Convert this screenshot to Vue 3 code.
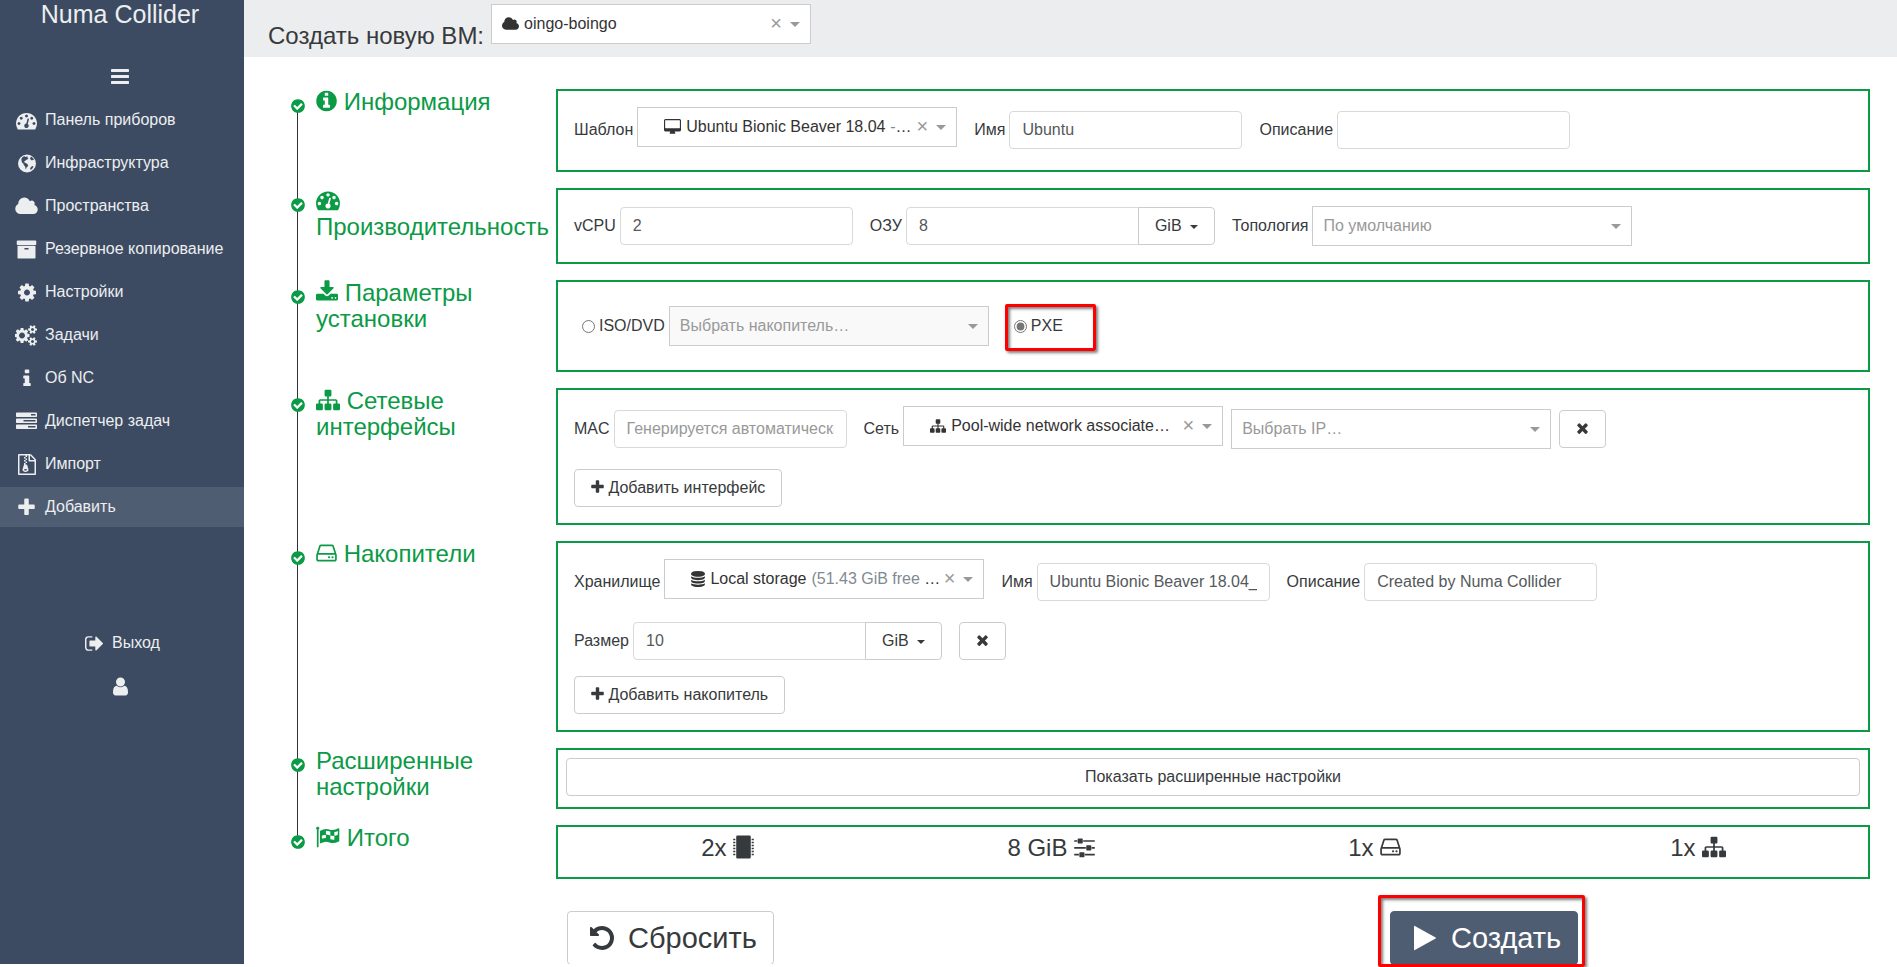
<script setup>
import { h, ref } from 'vue'

// Each glyph: [left edge, advance width, path], drawn on a 1792-unit em square.
const glyphs = {
  bars: [128, 1536, 'M1664 1344v128q0 26-19 45t-45 19h-1408q-26 0-45-19t-19-45v-128q0-26 19-45t45-19h1408q26 0 45 19t19 45zm0-512v128q0 26-19 45t-45 19h-1408q-26 0-45-19t-19-45v-128q0-26 19-45t45-19h1408q26 0 45 19t19 45zm0-512v128q0 26-19 45t-45 19h-1408q-26 0-45-19t-19-45v-128q0-26 19-45t45-19h1408q26 0 45 19t19 45z'],
  gauge: [0, 1792, 'M384 1152q0-53-37.5-90.5t-90.5-37.5-90.5 37.5-37.5 90.5 37.5 90.5 90.5 37.5 90.5-37.5 37.5-90.5zm192-448q0-53-37.5-90.5t-90.5-37.5-90.5 37.5-37.5 90.5 37.5 90.5 90.5 37.5 90.5-37.5 37.5-90.5zm428 481l101-382q6-26-7.5-48.5t-38.5-29.5-48 6.5-30 39.5l-101 382q-60 5-107 43.5t-63 98.5q-20 77 20 146t117 89 146-20 89-117q16-60-6-117t-72-91zm660-33q0-53-37.5-90.5t-90.5-37.5-90.5 37.5-37.5 90.5 37.5 90.5 90.5 37.5 90.5-37.5 37.5-90.5zm-640-640q0-53-37.5-90.5t-90.5-37.5-90.5 37.5-37.5 90.5 37.5 90.5 90.5 37.5 90.5-37.5 37.5-90.5zm448 192q0-53-37.5-90.5t-90.5-37.5-90.5 37.5-37.5 90.5 37.5 90.5 90.5 37.5 90.5-37.5 37.5-90.5zm320 448q0 261-141 483-19 29-54 29h-1402q-35 0-54-29-141-221-141-483 0-182 71-348t191-286 286-191 348-71 348 71 286 191 191 286 71 348z'],
  globe: [128, 1536, 'M896 128a768 768 0 1 0 0 1536a768 768 0 1 0 0-1536zM420 500l130-170 150-50 60 60 120-50 100 40-60 90 110 30-110 110-120 30-70 120-110 20 70 90 90 40 120 60 100 120-60 130-90 60-30 140-60-20-20-200-110-110-40-130-120-100-40-150zM1180 380l110-70 160 180 60 120-90-30-110 60-90-60-60-100zM1230 1190l130-80 90 40-80 160-150 130-60-90z'],
  cloud: [64, 1920, 'M1984 1152q0 159-112.5 271.5t-271.5 112.5h-1088q-185 0-316.5-131.5t-131.5-316.5q0-132 71-241.5t187-163.5q-2-28-2-43 0-212 150-362t362-150q158 0 286.5 88t187.5 230q70-62 166-62 106 0 181 75t75 181q0 75-41 138 129 30 213 134.5t84 239.5z'],
  archive: [0, 1792, 'M1088 832q0-26-19-45t-45-19h-256q-26 0-45 19t-19 45 19 45 45 19h256q26 0 45-19t19-45zm576-192v960q0 26-19 45t-45 19h-1408q-26 0-45-19t-19-45v-960q0-26 19-45t45-19h1408q26 0 45 19t19 45zm64-448v256q0 26-19 45t-45 19h-1536q-26 0-45-19t-19-45v-256q0-26 19-45t45-19h1536q26 0 45 19t19 45z'],
  cog: [128, 1536, 'M1152 896q0-106-75-181t-181-75-181 75-75 181 75 181 181 75 181-75 75-181zm512-109v222q0 12-8 23t-20 13l-185 28q-19 54-39 91 35 50 107 138 10 12 10 25t-9 23q-27 37-99 108t-94 71q-12 0-26-9l-138-108q-44 23-91 38-16 136-29 186-7 28-36 28h-222q-14 0-24.5-8.5t-11.5-21.5l-28-184q-49-16-90-37l-141 107q-10 9-25 9-14 0-25-11-126-114-165-168-7-10-7-23 0-12 8-23 15-21 51-66.5t54-70.5q-27-50-41-99l-183-27q-13-2-21-12.5t-8-23.5v-222q0-12 8-23t19-13l186-28q14-46 39-92-40-57-107-138-10-12-10-24 0-10 9-23 26-36 98.5-107.5t94.5-71.5q13 0 26 10l138 107q44-23 91-38 16-136 29-186 7-28 36-28h222q14 0 24.5 8.5t11.5 21.5l28 184q49 16 90 37l142-107q9-9 24-9 13 0 25 10 129 119 165 170 7 8 7 22 0 12-8 23-15 21-51 66.5t-54 70.5q26 50 41 98l183 28q13 2 21 12.5t8 23.5z'],
  cogs: [0, 1920, 'M832 896q0-106-75-181t-181-75-181 75-75 181 75 181 181 75 181-75 75-181zm768 512q0-52-38-90t-90-38-90 38-38 90q0 53 37.5 90.5t90.5 37.5 90.5-37.5 37.5-90.5zm0-1024q0-52-38-90t-90-38-90 38-38 90q0 53 37.5 90.5t90.5 37.5 90.5-37.5 37.5-90.5zm-384 421v185q0 10-7 19.5t-16 10.5l-155 24q-11 35-32 76 34 48 90 115 7 11 7 20 0 12-7 19-23 30-82.5 89.5t-78.5 59.5q-11 0-21-7l-115-90q-37 19-77 31-11 108-23 155-7 24-30 24h-186q-11 0-20-7.5t-10-17.5l-23-153q-34-10-75-31l-118 89q-7 7-20 7-11 0-21-8-144-133-144-160 0-9 7-19 10-14 41-53t47-61q-23-44-35-82l-152-24q-10-1-17-9.5t-7-19.5v-185q0-10 7-19.5t16-10.5l155-24q11-35 32-76-34-48-90-115-7-11-7-20 0-12 7-20 22-30 82-89t79-59q11 0 21 7l115 90q34-18 77-32 11-108 23-154 7-24 30-24h186q11 0 20 7.5t10 17.5l23 153q34 10 75 31l118-89q8-7 20-7 11 0 21 8 144 133 144 160 0 8-7 19-12 16-42 54t-45 60q23 48 34 82l152 23q10 2 17 10.5t7 19.5zm640 533v140q0 16-149 31-12 27-30 52 51 113 51 138 0 4-4 7-122 71-124 71-8 0-46-47t-52-68q-20 2-30 2t-30-2q-14 21-52 68t-46 47q-2 0-124-71-4-3-4-7 0-25 51-138-18-25-30-52-149-15-149-31v-140q0-16 149-31 13-29 30-52-51-113-51-138 0-4 4-7 4-2 35-20t59-34 30-16q8 0 46 46.5t52 67.5q20-2 30-2t30 2q51-71 92-112l6-2q4 0 124 70 4 3 4 7 0 25-51 138 17 23 30 52 149 15 149 31zm0-1024v140q0 16-149 31-12 27-30 52 51 113 51 138 0 4-4 7-122 71-124 71-8 0-46-47t-52-68q-20 2-30 2t-30-2q-14 21-52 68t-46 47q-2 0-124-71-4-3-4-7 0-25 51-138-18-25-30-52-149-15-149-31v-140q0-16 149-31 13-29 30-52-51-113-51-138 0-4 4-7 4-2 35-20t59-34 30-16q8 0 46 46.5t52 67.5q20-2 30-2t30 2q51-71 92-112l6-2q4 0 124 70 4 3 4 7 0 25-51 138 17 23 30 52 149 15 149 31z'],
  info: [576, 640, 'M1216 1344v128q0 26-19 45t-45 19h-512q-26 0-45-19t-19-45v-128q0-26 19-45t45-19h64v-384h-64q-26 0-45-19t-19-45v-128q0-26 19-45t45-19h384q26 0 45 19t19 45v576h64q26 0 45 19t19 45zm-128-1152v192q0 26-19 45t-45 19h-256q-26 0-45-19t-19-45v-192q0-26 19-45t45-19h256q26 0 45 19t19 45z'],
  infoCircle: [128, 1536, 'M1152 1376v-160q0-14-9-23t-23-9h-96v-512q0-14-9-23t-23-9h-320q-14 0-23 9t-9 23v160q0 14 9 23t23 9h96v320h-96q-14 0-23 9t-9 23v160q0 14 9 23t23 9h448q14 0 23-9t9-23zm-128-896v-160q0-14-9-23t-23-9h-192q-14 0-23 9t-9 23v160q0 14 9 23t23 9h192q14 0 23-9t9-23zm640 416q0 209-103 385.5t-279.5 279.5-385.5 103-385.5-103-279.5-279.5-103-385.5 103-385.5 279.5-279.5 385.5-103 385.5 103 279.5 279.5 103 385.5z'],
  tasks: [0, 1792, 'M1024 1408h640v-128h-640v128zm-384-512h1024v-128h-1024v128zm640-512h384v-128h-384v128zm512 832v256q0 26-19 45t-45 19h-1664q-26 0-45-19t-19-45v-256q0-26 19-45t45-19h1664q26 0 45 19t19 45zm0-512v256q0 26-19 45t-45 19h-1664q-26 0-45-19t-19-45v-256q0-26 19-45t45-19h1664q26 0 45 19t19 45zm0-512v256q0 26-19 45t-45 19h-1664q-26 0-45-19t-19-45v-256q0-26 19-45t45-19h1664q26 0 45 19t19 45z'],
  fileArchive: [128, 1536, 'M768 384v-128h-128v128h128zm128 128v-128h-128v128h128zm-128 128v-128h-128v128h128zm128 128v-128h-128v128h128zm700-388q28 28 48 76t20 88v1152q0 40-28 68t-68 28h-1344q-40 0-68-28t-28-68v-1600q0-40 28-68t68-28h896q40 0 88 20t76 48zm-444-244v376h376q-10-29-22-41l-313-313q-12-12-41-22zm384 1528v-1024h-416q-40 0-68-28t-28-68v-416h-128v128h-128v-128h-512v1536h1280zm-627-721l107 349q8 27 8 52 0 83-72.5 137.5t-183.5 54.5-183.5-54.5-72.5-137.5q0-25 8-52 21-63 120-396v-128h128v128h79q22 0 39 13t23 34zm-141 465q53 0 90.5-19t37.5-45-37.5-45-90.5-19-90.5 19-37.5 45 37.5 45 90.5 19z'],
  plus: [192, 1408, 'M1600 736v192q0 40-28 68t-68 28h-416v416q0 40-28 68t-68 28h-192q-40 0-68-28t-28-68v-416h-416q-40 0-68-28t-28-68v-192q0-40 28-68t68-28h416v-416q0-40 28-68t68-28h192q40 0 68 28t28 68v416h416q40 0 68 28t28 68z'],
  signOut: [64, 1568, 'M704 1440q0 4 1 20t.5 26.5-3 23.5-10 19.5-20.5 6.5h-320q-119 0-203.5-84.5t-84.5-203.5v-704q0-119 84.5-203.5t203.5-84.5h320q13 0 22.5 9.5t9.5 22.5q0 4 1 20t.5 26.5-3 23.5-10 19.5-20.5 6.5h-320q-66 0-113 47t-47 113v704q0 66 47 113t113 47h312l11.5 1 11.5 3 8 5.5 7 9 2 13.5zm928-544q0 26-19 45l-544 544q-19 19-45 19t-45-19-19-45v-288h-448q-26 0-45-19t-19-45v-384q0-26 19-45t45-19h448v-288q0-26 19-45t45-19 45 19l544 544q19 19 19 45z'],
  user: [256, 1280, 'M1536 1399q0 109-62.5 187t-150.5 78h-854q-88 0-150.5-78t-62.5-187q0-85 8.5-160.5t31.5-152 58.5-131 94-89 134.5-34.5q131 128 313 128t313-128q76 0 134.5 34.5t94 89 58.5 131 31.5 152 8.5 160.5zm-256-887q0 159-112.5 271.5t-271.5 112.5-271.5-112.5-112.5-271.5 112.5-271.5 271.5-112.5 271.5 112.5 112.5 271.5z'],
  check: [0, 1792, 'M1412 734q0-28-18-46l-91-90q-19-19-45-19t-45 19l-408 407-226-226q-19-19-45-19t-45 19l-91 90q-18 18-18 46 0 27 18 45l362 362q19 19 45 19 27 0 46-19l543-543q18-18 18-45zm252 162q0 209-103 385.5t-279.5 279.5-385.5 103-385.5-103-279.5-279.5-103-385.5 103-385.5 279.5-279.5 385.5-103 385.5 103 279.5 279.5 103 385.5z'],
  download: [64, 1664, 'M1344 1344q0-26-19-45t-45-19-45 19-19 45 19 45 45 19 45-19 19-45zm256 0q0-26-19-45t-45-19-45 19-19 45 19 45 45 19 45-19 19-45zm128-224v320q0 40-28 68t-68 28h-1472q-40 0-68-28t-28-68v-320q0-40 28-68t68-28h465l135 136q58 56 136 56t136-56l136-136h464q40 0 68 28t28 68zm-325-569q17 41-14 70l-448 448q-18 19-45 19t-45-19l-448-448q-31-29-14-70 17-39 59-39h256v-448q0-26 19-45t45-19h256q26 0 45 19t19 45v448h256q42 0 59 39z'],
  sitemap: [0, 1792, 'M1792 1248v320q0 40-28 68t-68 28h-320q-40 0-68-28t-28-68v-320q0-40 28-68t68-28h96v-192h-512v192h96q40 0 68 28t28 68v320q0 40-28 68t-68 28h-320q-40 0-68-28t-28-68v-320q0-40 28-68t68-28h96v-192h-512v192h96q40 0 68 28t28 68v320q0 40-28 68t-68 28h-320q-40 0-68-28t-28-68v-320q0-40 28-68t68-28h96v-192q0-52 38-90t90-38h512v-192h-96q-40 0-68-28t-28-68v-320q0-40 28-68t68-28h320q40 0 68 28t28 68v320q0 40-28 68t-68 28h-96v192h512q52 0 90 38t38 90v192h96q40 0 68 28t28 68z'],
  hdd: [128, 1536, 'M1168 1216q0 33-23.5 56.5t-56.5 23.5-56.5-23.5-23.5-56.5 23.5-56.5 56.5-23.5 56.5 23.5 23.5 56.5zm256 0q0 33-23.5 56.5t-56.5 23.5-56.5-23.5-23.5-56.5 23.5-56.5 56.5-23.5 56.5 23.5 23.5 56.5zm112 160v-320q0-13-9.5-22.5t-22.5-9.5h-1216q-13 0-22.5 9.5t-9.5 22.5v320q0 13 9.5 22.5t22.5 9.5h1216q13 0 22.5-9.5t9.5-22.5zm-1230-480h1180l-157-482q-4-13-16-21.5t-26-8.5h-782q-14 0-26 8.5t-16 21.5zm1358 160v320q0 66-47 113t-113 47h-1216q-66 0-113-47t-47-113v-320q0-25 16-75l197-606q17-53 63-86t101-33h782q55 0 101 33t63 86l197 606q16 50 16 75z'],
  database: [128, 1536, 'M896 768q237 0 443-43t325-127v170q0 69-103 128t-280 93.5-385 34.5-385-34.5-280-93.5-103-128v-170q119 84 325 127t443 43zm0 768q237 0 443-43t325-127v170q0 69-103 128t-280 93.5-385 34.5-385-34.5-280-93.5-103-128v-170q119 84 325 127t443 43zm0-384q237 0 443-43t325-127v170q0 69-103 128t-280 93.5-385 34.5-385-34.5-280-93.5-103-128v-170q119 84 325 127t443 43zm0-1152q208 0 385 34.5t280 93.5 103 128v128q0 69-103 128t-280 93.5-385 34.5-385-34.5-280-93.5-103-128v-128q0-69 103-128t280-93.5 385-34.5z'],
  desktop: [-64, 1920, 'M1728 992v-832q0-13-9.5-22.5t-22.5-9.5h-1600q-13 0-22.5 9.5t-9.5 22.5v832q0 13 9.5 22.5t22.5 9.5h1600q13 0 22.5-9.5t9.5-22.5zm128-832v1088q0 66-47 113t-113 47h-544q0 37 16 77.5t32 71 16 43.5q0 26-19 45t-45 19h-512q-26 0-45-19t-19-45q0-14 16-44t32-70 16-78h-544q-66 0-113-47t-47-113v-1088q0-66 47-113t113-47h1600q66 0 113 47t47 113z'],
  times: [192, 1408, 'M1490 1322q0 40-28 68l-136 136q-28 28-68 28t-68-28l-294-294-294 294q-28 28-68 28t-68-28l-136-136q-28-28-28-68t28-68l294-294-294-294q-28-28-28-68t28-68l136-136q28-28 68-28t68 28l294 294 294-294q28-28 68-28t68 28l136 136q28 28 28 68t-28 68l-294 294 294 294q28 28 28 68z'],
  undo: [128, 1536, 'M1664 896q0 156-61 298t-164 245-245 164-298 61q-172 0-327-72.5t-264-204.5q-7-10-6.5-22.5t8.5-20.5l137-138q10-9 25-9 16 2 23 12 73 95 179 147t225 52q104 0 198.5-40.5t163.5-109.5 109.5-163.5 40.5-198.5-40.5-198.5-109.5-163.5-163.5-109.5-198.5-40.5q-98 0-188 35.5t-160 101.5l137 138q31 30 14 69-17 40-59 40h-448q-26 0-45-19t-19-45v-448q0-42 40-59 39-17 69 14l130 129q107-101 244.5-156.5t284.5-55.5q156 0 298 61t245 164 164 245 61 298z'],
  play: [192, 1408, 'M1576 927l-1328 738q-23 13-39.5 3t-16.5-36v-1472q0-26 16.5-36t39.5 3l1328 738q23 13 23 31t-23 31z'],
  sliders: [128, 1536, 'M480 1408v128h-352v-128h352zm352-128q26 0 45 19t19 45v256q0 26-19 45t-45 19h-256q-26 0-45-19t-19-45v-256q0-26 19-45t45-19h256zm160-384v128h-864v-128h864zm-640-512v128h-224v-128h224zm1312 1024v128h-736v-128h736zm-960-1152q26 0 45 19t19 45v256q0 26-19 45t-45 19h-256q-26 0-45-19t-19-45v-256q0-26 19-45t45-19h256zm640 512q26 0 45 19t19 45v256q0 26-19 45t-45 19h-256q-26 0-45-19t-19-45v-256q0-26 19-45t45-19h256zm320 128v128h-224v-128h224zm0-512v128h-864v-128h864z'],
  chip: [128, 1536, 'M448 32h896q96 0 96 96v1536q0 96-96 96h-896q-96 0-96-96v-1536q0-96 96-96zM128 288h160v96h-160zM128 512h160v96h-160zM128 736h160v96h-160zM128 960h160v96h-160zM128 1184h160v96h-160zM128 1408h160v96h-160zM1504 288h160v96h-160zM1504 512h160v96h-160zM1504 736h160v96h-160zM1504 960h160v96h-160zM1504 1184h160v96h-160zM1504 1408h160v96h-160z'],
  flag: [0, 1792, 'M128 128a112 112 0 0 1 64 208v1264q0 64-64 64t-64-64v-1264a112 112 0 0 1 64-208zM320 420q330-190 660-90 330 120 700-80 60-20 60 50v870q0 40-40 60-380 190-700 70-320-120-640 70-60 20-60-40v-850q0-40 20-60zM740 430v300q-150 0-300 80v220q150-60 300-60v-260q150 0 330 70v-300q-160-50-330-50zM1070 780v290q170 50 300 30v-290q-150 20-300-30zM1370 810q140-20 260-80v-290q-120 60-260 80z'],
}

const Icon = (props) => {
  const [x, w, d] = glyphs[props.name]
  return h(
    'svg',
    {
      viewBox: `${x} 0 ${w} 1792`,
      width: Math.round((w / 1792) * props.size),
      height: props.size,
      fill: 'currentColor',
      'aria-hidden': 'true',
    },
    [h('path', { d, 'fill-rule': 'evenodd' })],
  )
}
Icon.props = ['name', 'size']

const menu = [
  { icon: 'gauge', text: 'Панель приборов' },
  { icon: 'globe', text: 'Инфраструктура' },
  { icon: 'cloud', text: 'Пространства' },
  { icon: 'archive', text: 'Резервное копирование' },
  { icon: 'cog', text: 'Настройки' },
  { icon: 'cogs', text: 'Задачи' },
  { icon: 'info', text: 'Об NC' },
  { icon: 'tasks', text: 'Диспетчер задач' },
  { icon: 'fileArchive', text: 'Импорт' },
  { icon: 'plus', text: 'Добавить', active: true },
]

const summary = [
  { text: '2x', icon: 'chip' },
  { text: '8 GiB', icon: 'sliders' },
  { text: '1x', icon: 'hdd' },
  { text: '1x', icon: 'sitemap' },
]

const boot = ref('pxe')
const vmName = ref('Ubuntu')
const vmDescription = ref('')
const cpus = ref('2')
const memory = ref('8')
const mac = ref('')
const diskName = ref('Ubuntu Bionic Beaver 18.04_')
const diskDescription = ref('Created by Numa Collider')
const diskSize = ref('10')
</script>

<template>
  <div class="page">
    <nav class="sidebar" aria-label="Главное меню">
      <a class="brand" href="#">Numa Collider</a>
      <button class="toggle" type="button" aria-label="Свернуть меню"><Icon name="bars" size="21" /></button>
      <ul class="menu">
        <li v-for="item in menu" :key="item.text">
          <a class="menu-link" :class="{ active: item.active }" href="#">
            <span class="menu-icon"><Icon :name="item.icon" size="21" /></span>
            <span>{{ item.text }}</span>
          </a>
        </li>
      </ul>
      <ul class="menu account">
        <li>
          <a class="menu-link" href="#">
            <span class="menu-icon"><Icon name="signOut" size="21" /></span>
            <span>Выход</span>
          </a>
        </li>
        <li>
          <a class="menu-link" href="#" aria-label="Профиль"><Icon name="user" size="21" /></a>
        </li>
      </ul>
    </nav>

    <main class="content">
      <header class="topbar">
        <label class="title" for="pool">Создать новую ВМ:</label>
        <div class="combo">
          <Icon name="cloud" size="16" />
          <select id="pool"><option>oingo-boingo</option></select>
          <button class="clear" type="button" aria-label="Очистить">×</button>
          <span class="arrow"></span>
        </div>
      </header>

      <form class="wizard" @submit.prevent>
        <ol class="steps">
          <li class="step">
            <span class="rail"><Icon name="check" size="16" /></span>
            <h2><Icon name="infoCircle" size="24" /> Информация</h2>
            <section class="panel">
              <div class="row row-filled">
                <div class="field">
                  <label for="template">Шаблон</label>
                  <div class="combo filled">
                    <Icon name="desktop" size="16" />
                    <select id="template"><option>Ubuntu Bionic Beaver 18.04</option></select>
                    <span class="hint">-<b>…</b></span>
                    <button class="clear" type="button" aria-label="Очистить">×</button>
                    <span class="arrow"></span>
                  </div>
                </div>
                <div class="field">
                  <label for="vm-name">Имя</label>
                  <input id="vm-name" v-model="vmName" class="control" type="text" />
                </div>
                <div class="field">
                  <label for="vm-description">Описание</label>
                  <input id="vm-description" v-model="vmDescription" class="control" type="text" />
                </div>
              </div>
            </section>
          </li>

          <li class="step">
            <span class="rail"><Icon name="check" size="16" /></span>
            <h2><Icon name="gauge" size="24" /> Производительность</h2>
            <section class="panel">
              <div class="row">
                <div class="field">
                  <label for="cpus">vCPU</label>
                  <input id="cpus" v-model="cpus" class="control" type="text" />
                </div>
                <div class="field">
                  <label for="memory">ОЗУ</label>
                  <div class="group">
                    <input id="memory" v-model="memory" class="control" type="text" />
                    <button class="btn unit" type="button" aria-haspopup="menu">GiB <span class="caret"></span></button>
                  </div>
                </div>
                <div class="field">
                  <label for="topology">Топология</label>
                  <div class="combo empty">
                    <select id="topology"><option>По умолчанию</option></select>
                    <span class="arrow"></span>
                  </div>
                </div>
              </div>
            </section>
          </li>

          <li class="step">
            <span class="rail"><Icon name="check" size="16" /></span>
            <h2><Icon name="download" size="24" /> Параметры установки</h2>
            <section class="panel roomy">
              <div class="row">
                <div class="field boot">
                  <input id="boot-iso" v-model="boot" type="radio" name="boot" value="iso" />
                  <label for="boot-iso">ISO/DVD</label>
                  <div class="combo empty disabled">
                    <select aria-label="Накопитель" disabled><option>Выбрать накопитель…</option></select>
                    <span class="arrow"></span>
                  </div>
                </div>
                <div class="field boot marked">
                  <input id="boot-pxe" v-model="boot" type="radio" name="boot" value="pxe" />
                  <label for="boot-pxe">PXE</label>
                  <span class="mark mark-radio"></span>
                </div>
              </div>
            </section>
          </li>

          <li class="step">
            <span class="rail"><Icon name="check" size="16" /></span>
            <h2><Icon name="sitemap" size="24" /> Сетевые интерфейсы</h2>
            <section class="panel">
              <div class="row row-filled">
                <div class="field">
                  <label for="mac">MAC</label>
                  <input id="mac" v-model="mac" class="control" type="text" placeholder="Генерируется автоматически" />
                </div>
                <div class="field">
                  <label for="network">Сеть</label>
                  <div class="combo filled">
                    <Icon name="sitemap" size="16" />
                    <select id="network"><option>Pool-wide network associate…</option></select>
                    <button class="clear" type="button" aria-label="Очистить">×</button>
                    <span class="arrow"></span>
                  </div>
                  <div class="combo empty nearby">
                    <select aria-label="IP"><option>Выбрать IP…</option></select>
                    <span class="arrow"></span>
                  </div>
                  <button class="btn nearby" type="button" aria-label="Удалить интерфейс"><Icon name="times" size="16" /></button>
                </div>
              </div>
              <div class="row">
                <button class="btn" type="button"><Icon name="plus" size="16" /> Добавить интерфейс</button>
              </div>
            </section>
          </li>

          <li class="step">
            <span class="rail"><Icon name="check" size="16" /></span>
            <h2><Icon name="hdd" size="24" /> Накопители</h2>
            <section class="panel">
              <div class="row row-filled">
                <div class="field">
                  <label for="storage">Хранилище</label>
                  <div class="combo filled">
                    <Icon name="database" size="16" />
                    <select id="storage"><option>Local storage</option></select>
                    <span class="hint">(51.43 GiB free <b>…</b></span>
                    <button class="clear" type="button" aria-label="Очистить">×</button>
                    <span class="arrow"></span>
                  </div>
                </div>
                <div class="field">
                  <label for="disk-name">Имя</label>
                  <input id="disk-name" v-model="diskName" class="control" type="text" />
                </div>
                <div class="field">
                  <label for="disk-description">Описание</label>
                  <input id="disk-description" v-model="diskDescription" class="control" type="text" />
                </div>
              </div>
              <div class="row">
                <div class="field">
                  <label for="disk-size">Размер</label>
                  <div class="group">
                    <input id="disk-size" v-model="diskSize" class="control" type="text" />
                    <button class="btn unit" type="button" aria-haspopup="menu">GiB <span class="caret"></span></button>
                  </div>
                </div>
                <button class="btn" type="button" aria-label="Удалить накопитель"><Icon name="times" size="16" /></button>
              </div>
              <div class="row">
                <button class="btn" type="button"><Icon name="plus" size="16" /> Добавить накопитель</button>
              </div>
            </section>
          </li>

          <li class="step">
            <span class="rail"><Icon name="check" size="16" /></span>
            <h2>Расширенные настройки</h2>
            <section class="panel advanced">
              <button class="btn wide" type="button">Показать расширенные настройки</button>
            </section>
          </li>

          <li class="step">
            <span class="rail"><Icon name="check" size="16" /></span>
            <h2><Icon name="flag" size="24" /> Итого</h2>
            <section class="panel summary">
              <span v-for="(item, i) in summary" :key="i">{{ item.text }} <Icon :name="item.icon" size="24" /></span>
            </section>
          </li>
        </ol>

        <div class="actions">
          <div>
            <button class="btn large" type="reset">
              <span class="large-icon"><Icon name="undo" size="28" /></span>
              <span>Сбросить</span>
            </button>
          </div>
          <div>
            <div class="marked">
              <button class="btn large primary" type="submit">
                <span class="large-icon"><Icon name="play" size="28" /></span>
                <span>Создать</span>
              </button>
              <span class="mark mark-submit"></span>
            </div>
          </div>
        </div>
      </form>
    </main>
  </div>
</template>

<style>
body {
  margin: 0;
  background: #fff;
}
</style>

<style scoped>
.page {
  position: relative;
  display: flex;
  height: 100vh;
  overflow: hidden;
  font: 16px/24px "Liberation Sans", Arial, sans-serif;
  color: #373a3c;
}

.page::after {
  content: "";
  position: absolute;
  inset: auto 0 0 0;
  height: 3px;
  background: #fff;
  z-index: 1;
}

ul,
ol {
  list-style: none;
  margin: 0;
  padding: 0;
}

button,
input,
select {
  font: inherit;
  color: inherit;
  box-sizing: border-box;
}

svg {
  flex: none;
  vertical-align: -2px;
}

/* Sidebar */
.sidebar {
  display: flex;
  flex-direction: column;
  flex: none;
  width: 244px;
  background: #3c4b62;
  color: #eceef0;
}

.brand {
  padding-right: 4px;
  color: inherit;
  font-size: 25px;
  line-height: 28px;
  text-align: center;
  text-decoration: none;
}

.toggle {
  display: flex;
  justify-content: center;
  margin-top: 28px;
  padding: 10px 4px 13px 0;
  border: 0;
  background: none;
}

.menu {
  display: flex;
  flex-direction: column;
  gap: 3px;
}

.menu-link {
  display: flex;
  align-items: center;
  gap: 5px;
  padding: 8px 13px;
  color: inherit;
  text-decoration: none;
  line-height: 24px;
}

.menu-link.active {
  background: #4f5d72;
}

.menu-icon {
  display: flex;
  justify-content: center;
  width: 27px;
}

.account {
  margin-top: 96px;
}

.account .menu-link {
  justify-content: center;
  min-height: 24px;
  padding: 8px 4px 8px 0;
}

/* Header */
.content {
  flex: 1;
  min-width: 0;
}

.topbar {
  display: flex;
  align-items: flex-end;
  gap: 7px;
  padding: 4px 24px 8px;
  background: #ecedef;
}

.title {
  font-size: 24px;
  line-height: 26px;
}

.topbar .combo {
  margin-bottom: 5px;
}

/* Steps */
.wizard {
  padding: 32px 27px 0 46px;
}

.step {
  display: grid;
  grid-template-columns: 16px 240px 1fr;
  column-gap: 0;
}

.rail {
  position: relative;
  display: flex;
  padding-top: 9px;
  color: #0b9a45;
}

.rail::before {
  content: "";
  position: absolute;
  top: 0;
  bottom: 0;
  left: 7px;
  width: 1px;
  background: #333;
}

.step:first-child .rail::before {
  top: 17px;
}

.step:last-child .rail::before {
  bottom: auto;
  height: 17px;
}

.rail svg {
  position: relative;
  background: radial-gradient(circle, #fff 5px, transparent 6px);
}

h2 {
  margin: 0 0 0 10px;
  color: #0b9a45;
  font-size: 24px;
  font-weight: 400;
  line-height: 26px;
}

h2 svg,
.summary svg {
  vertical-align: -3px;
}

.panel {
  display: flex;
  flex-direction: column;
  gap: 16px;
  margin: 0 0 16px 10px;
  padding: 16px;
  border: 2px solid #0b9a45;
}

.roomy {
  padding: 24px 16px;
}

.row,
.field,
.group {
  display: flex;
  align-items: center;
}

.row {
  gap: 17px;
}

.row-filled {
  padding-bottom: 1px;
}

.field {
  gap: 4px;
}

/* Controls */
.control {
  width: 233px;
  height: 38px;
  padding: 6px 12px;
  border: 1px solid #d9d9d9;
  border-radius: 4px;
  background: #fff;
  color: #55595c;
}

.control::placeholder {
  color: #999;
}

.btn {
  padding: 6px 16px;
  border: 1px solid #ccc;
  border-radius: 4px;
  background: #fff;
  line-height: 24px;
  white-space: nowrap;
}

.group .control {
  border-radius: 4px 0 0 4px;
}

.unit {
  margin-left: -1px;
  border-radius: 0 4px 4px 0;
}

.caret {
  display: inline-block;
  margin-left: 4px;
  border: 4px solid transparent;
  border-top-color: currentColor;
  border-bottom: 0;
  vertical-align: 2px;
}

.combo {
  display: flex;
  align-items: center;
  box-sizing: border-box;
  width: 320px;
  height: 40px;
  padding: 0 10px;
  border: 1px solid #ccc;
  background: #fff;
  color: #333;
}

.filled {
  margin-bottom: 6px;
  padding-left: 26px;
}

.combo select {
  appearance: none;
  padding: 0;
  border: 0;
  background: none;
}

.combo svg + select {
  margin-left: 5px;
}

.empty select {
  flex: 1;
  color: #999;
  opacity: 1;
}

.disabled {
  background: #f9f9f9;
}

.nearby {
  margin-left: 4px;
}

.hint {
  margin-left: 4px;
  color: #818a91;
  white-space: nowrap;
}

.hint b {
  color: #333;
  font-weight: 400;
}

.clear {
  margin: 0 8px 3px auto;
  padding: 0;
  border: 0;
  background: none;
  color: #999;
  font-size: 20px;
  line-height: 20px;
}

.arrow {
  border: 5px solid transparent;
  border-top-color: #999;
  border-bottom: 0;
}

.boot {
  gap: 4px;
  padding-left: 8px;
}

.boot input {
  width: 13px;
  height: 13px;
  margin: 0;
  accent-color: #757575;
}

/* Red highlight frames */
.marked {
  position: relative;
  width: fit-content;
}

.mark {
  position: absolute;
  z-index: 2;
  border: 3px solid #f00;
  border-radius: 2px;
  box-shadow: 2px 2px 3px rgba(0, 0, 0, 0.5), inset 2px 2px 3px rgba(0, 0, 0, 0.5);
  pointer-events: none;
}

.mark-radio {
  inset: -10px -33px -13px -1px;
}

.mark-submit {
  inset: -16px -7px -2px -12px;
}

/* Last panels */
.advanced {
  padding: 8px 8px 11px;
}

.summary {
  display: grid;
  grid-template-columns: repeat(4, 1fr);
  gap: 0;
  padding: 8px 8px 16px;
  font-size: 24px;
  line-height: 26px;
  text-align: center;
}

.actions {
  display: grid;
  grid-template-columns: 1fr 480px;
  padding: 16px 0 0 277px;
}

.large {
  display: flex;
  align-items: center;
  gap: 8px;
  padding: 12px 16px;
  font-size: 29px;
  line-height: 28px;
}

.large-icon {
  display: flex;
  justify-content: center;
  width: 36px;
}

.primary {
  border-color: #4f5d72;
  background: #4f5d72;
  color: #fff;
}
</style>
